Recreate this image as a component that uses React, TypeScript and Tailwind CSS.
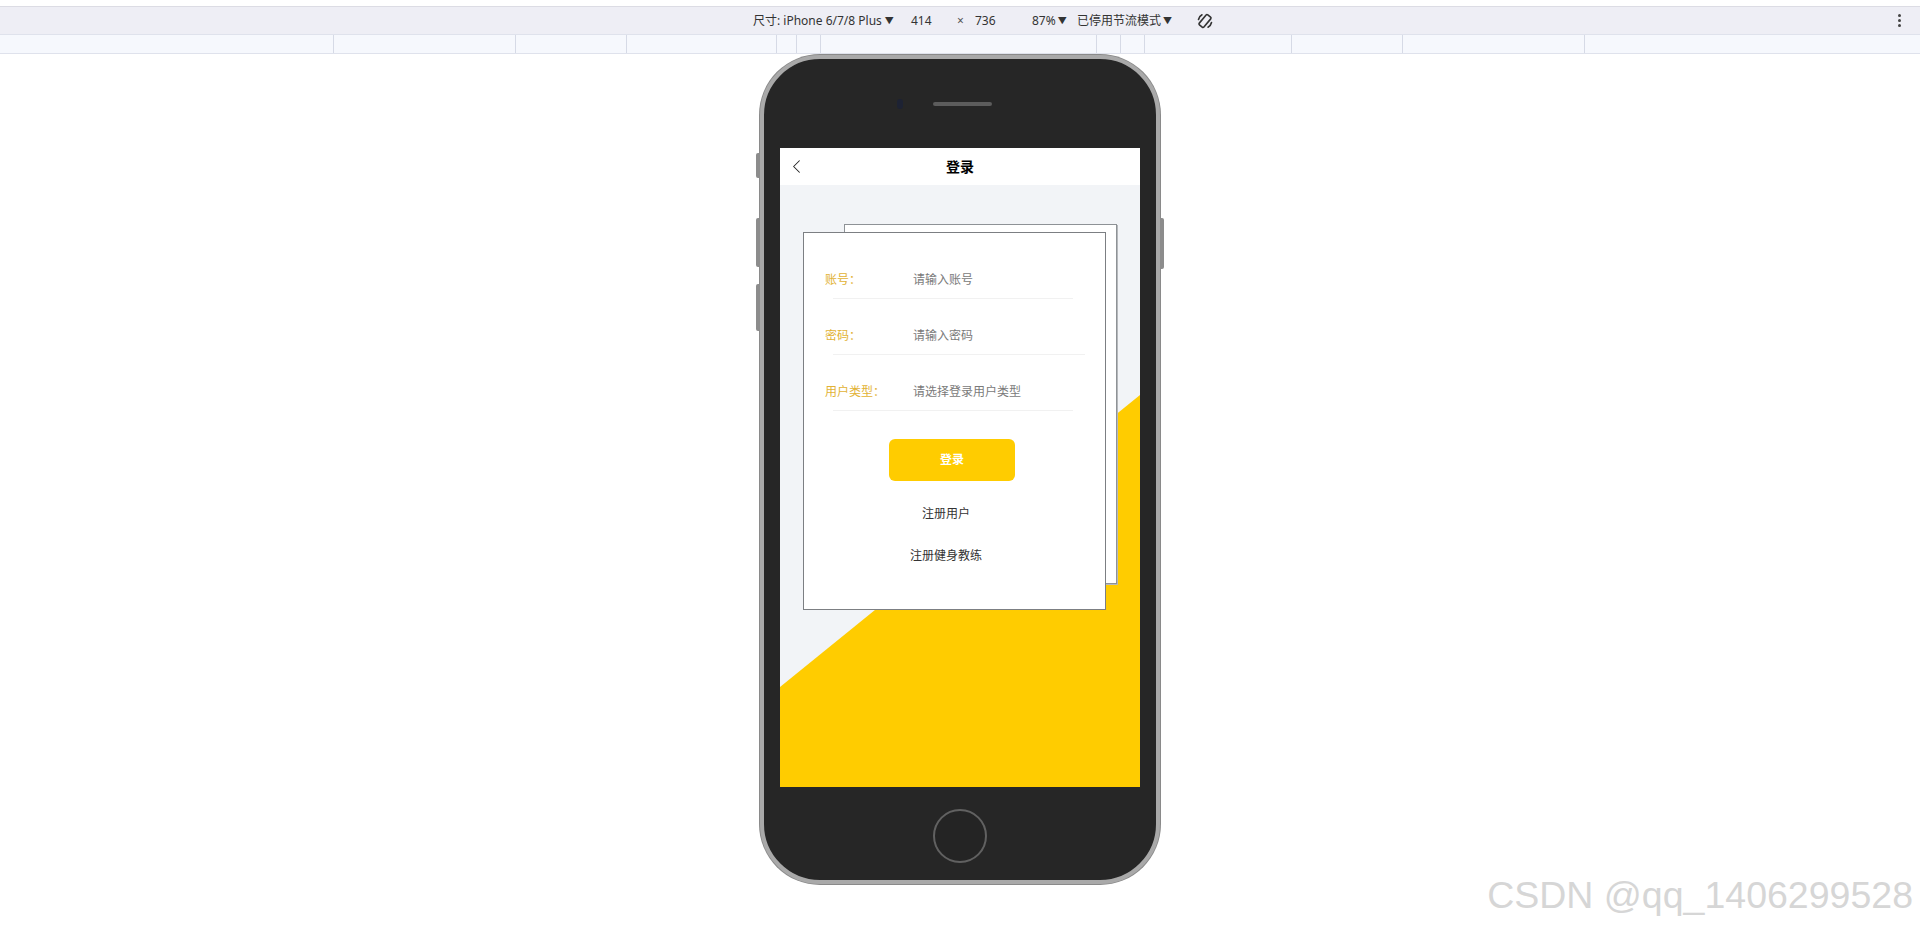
import { ChevronLeft } from 'lucide-react'

const font = { fontFamily: '"Noto Sans", "Noto Sans CJK SC", sans-serif' }

// media query ruler segments (widths in px)
const rulerSegments = [334, 182, 111, 150, 20, 24, 276, 24, 24, 147, 111, 182]

const formRows = [
	{ label: '账号：', placeholder: '请输入账号', lineWidth: 'w-[240px]' },
	{ label: '密码：', placeholder: '请输入密码', lineWidth: 'w-[252px]' },
	{ label: '用户类型：', placeholder: '请选择登录用户类型', lineWidth: 'w-[240px]' },
]

const RotateIcon = () => (
	<svg width="18" height="18" viewBox="0 0 18 18" fill="none" stroke="#333" strokeWidth="1.6">
		<rect x="6" y="2.5" width="6" height="13" rx="1.2" transform="rotate(40 9 9)" />
		<path d="M2.5 7.5 A7 7 0 0 1 6 2.8" strokeLinecap="round" />
		<path d="M15.5 10.5 A7 7 0 0 1 12 15.2" strokeLinecap="round" />
	</svg>
)

const Toolbar = () => (
	<div className="w-full text-[12px] text-[#333]" style={font}>
		<div className="h-[7px] border-b border-[#dcdce4] bg-white" />
		<div className="flex h-[27px] items-center bg-[#eeeef5] pl-[753px]">
			<div className="flex w-[158px] items-center">
				<span>尺寸: iPhone 6/7/8 Plus</span>
				<span className="ml-[3px] text-[9px]">▼</span>
			</div>
			<div className="w-[46px]">414</div>
			<div className="w-[18px] text-[#555]">×</div>
			<div className="w-[57px]">736</div>
			<div className="flex w-[45px] items-center">
				<span>87%</span>
				<span className="ml-[2px] text-[9px]">▼</span>
			</div>
			<div className="flex w-[119px] items-center">
				<span>已停用节流模式</span>
				<span className="ml-[2px] text-[9px]">▼</span>
			</div>
			<RotateIcon />
			<div className="ml-auto mr-[19px] flex flex-col gap-[2px]">
				<span className="h-[3px] w-[3px] rounded-full bg-[#444]" />
				<span className="h-[3px] w-[3px] rounded-full bg-[#444]" />
				<span className="h-[3px] w-[3px] rounded-full bg-[#444]" />
			</div>
		</div>
		<div className="flex h-[20px] border-y border-[#dfe2ec] bg-[#f6f8fd]">
			{rulerSegments.map((w, i) => (
				<div key={i} className="h-full shrink-0 border-r border-[#d6dae6]" style={{ width: w }} />
			))}
			<div className="flex-1" />
		</div>
	</div>
)

const LoginCard = () => (
	<div className="relative ml-[23px] mt-[47px] h-[378px] w-[303px]">
		<div className="absolute left-[41px] top-[-8px] h-[360px] w-[273px] border border-[#8e9296] bg-white shadow-[1px_1px_0_#b5b8bb]" />
		<div className="relative h-full w-full border border-[#7c7f83] bg-white pl-[21px] pt-[29px]">
			<div className="flex flex-col gap-[19px]">
				{formRows.map((row) => (
					<div key={row.label}>
						<div className="flex h-[36px] items-center text-[12px]">
							<span className="w-[88px] text-[#e2b235]">{row.label}</span>
							<span className="text-[#7a7a7a]">{row.placeholder}</span>
						</div>
						<div className={`ml-[8px] h-px bg-[#f1f1f1] ${row.lineWidth}`} />
					</div>
				))}
			</div>
			<button className="ml-[64px] mt-[28px] flex h-[42px] w-[126px] items-center justify-center rounded-[6px] bg-[#ffcc00] text-[12px] font-semibold text-white">
				登录
			</button>
			<div className="mt-[25px] flex w-[242px] flex-col items-center gap-[26px] text-[12px] leading-[16px] text-[#333]">
				<span>注册用户</span>
				<span>注册健身教练</span>
			</div>
		</div>
	</div>
)

const PhoneScreen = () => (
	<div className="flex h-[639px] w-[360px] flex-col bg-[#f2f4f7]" style={font}>
		<div className="relative flex h-[37px] items-center justify-center bg-white">
			<ChevronLeft className="absolute left-[5px] top-[7px] h-[23px] w-[23px] text-[#222]" strokeWidth={1.1} />
			<span className="text-[14px] font-semibold text-black">登录</span>
		</div>
		<div className="relative flex-1">
			<svg className="absolute inset-0 h-full w-full" viewBox="0 0 360 602" preserveAspectRatio="none">
				<polygon points="360,210 360,602 0,602 0,502" fill="#ffcc00" />
			</svg>
			<div className="relative">
				<LoginCard />
			</div>
		</div>
	</div>
)

const Phone = () => (
	<div className="relative mx-auto mt-px h-[829px] w-[400px] rounded-[60px] border-[4px] border-[#a9a9a9] bg-[#262626] shadow-[0_0_0_1px_#8a8a8a]">
		<span className="absolute left-[-8px] top-[94px] h-[25px] w-[4px] rounded-l-[2px] bg-[#8c8c8c]" />
		<span className="absolute left-[-8px] top-[159px] h-[49px] w-[4px] rounded-l-[2px] bg-[#8c8c8c]" />
		<span className="absolute left-[-8px] top-[225px] h-[47px] w-[4px] rounded-l-[2px] bg-[#8c8c8c]" />
		<span className="absolute right-[-8px] top-[159px] h-[51px] w-[4px] rounded-r-[2px] bg-[#8c8c8c]" />
		<div className="flex h-[89px] items-center justify-center pr-[31px]">
			<span className="h-[10px] w-[6px] rounded-full bg-[#1d2233]" />
			<span className="ml-[30px] h-[4px] w-[59px] rounded-full bg-[#5c5c5c]" />
		</div>
		<div className="px-[16px]">
			<PhoneScreen />
		</div>
		<div className="flex justify-center pt-[22px]">
			<div className="h-[54px] w-[54px] rounded-full border-2 border-[#616161] bg-[#242424]" />
		</div>
	</div>
)

export default function App() {
	return (
		<div className="relative h-[928px] w-full overflow-hidden bg-white">
			<Toolbar />
			<Phone />
			<div
				className="absolute bottom-[14px] right-[7px] text-[37.5px] leading-none text-[#d6d6d6]"
				style={{ fontFamily: '"Liberation Sans", Arial, sans-serif' }}
			>
				CSDN @qq_1406299528
			</div>
		</div>
	)
}
